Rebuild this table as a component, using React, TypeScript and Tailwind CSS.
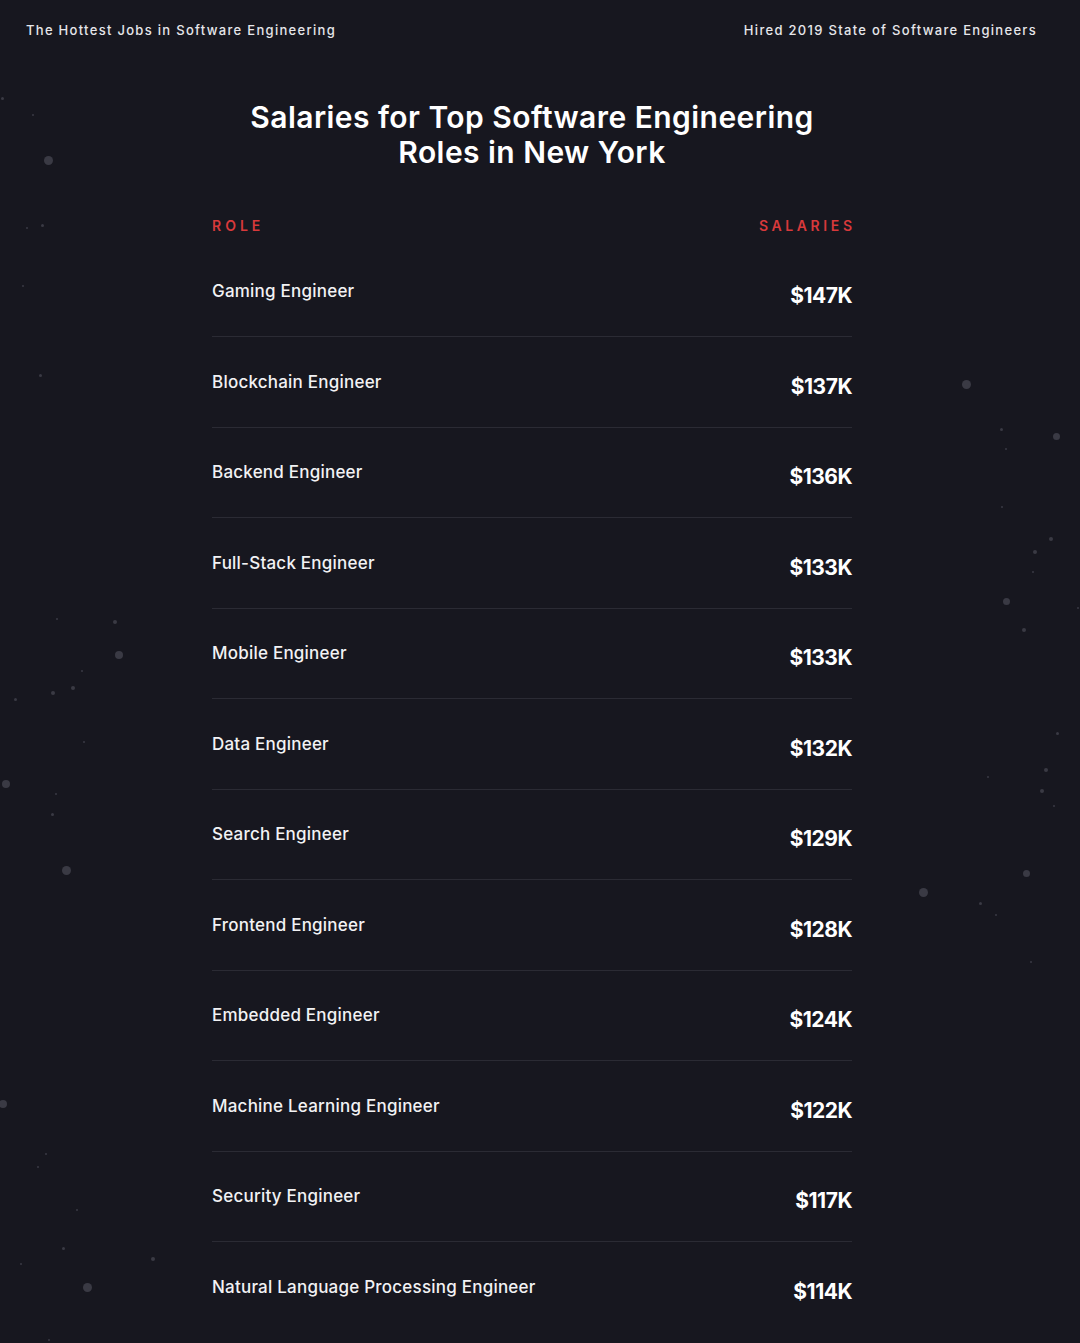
import React from "react";

const rows: [string, string][] = [
  ["Gaming Engineer", "$147K"],
  ["Blockchain Engineer", "$137K"],
  ["Backend Engineer", "$136K"],
  ["Full-Stack Engineer", "$133K"],
  ["Mobile Engineer", "$133K"],
  ["Data Engineer", "$132K"],
  ["Search Engineer", "$129K"],
  ["Frontend Engineer", "$128K"],
  ["Embedded Engineer", "$124K"],
  ["Machine Learning Engineer", "$122K"],
  ["Security Engineer", "$117K"],
  ["Natural Language Processing Engineer", "$114K"],
];

const dots: [number, number, number][] = [
  [2, 98, 1.5], [33, 115, 1], [48, 160, 4.5], [42, 225, 1.5], [27, 228, 0.7], [23, 286, 1], [40, 375, 1.5],
  [57, 619, 1], [115, 622, 2], [119, 655, 4], [82, 671, 1], [73, 688, 2], [53, 693, 2], [15, 699, 1.5],
  [84, 742, 1], [6, 784, 4], [56, 794, 1], [52, 814, 1.5], [66, 870, 4.5],
  [3, 1104, 4], [46, 1154, 1], [38, 1167, 1], [77, 1210, 1], [63, 1248, 1.5], [21, 1264, 1], [153, 1259, 2],
  [87, 1287, 4.5], [49, 1340, 1],
  [966, 384, 4.5], [1001, 429, 1.5], [1056, 436, 3.5], [1006, 449, 1], [1002, 507, 1], [1051, 539, 2],
  [1035, 552, 2], [1033, 572, 1], [1006, 601, 3.5], [1024, 630, 2], [1078, 608, 1],
  [1057, 733, 1.5], [1046, 770, 2], [988, 777, 1], [1042, 791, 2], [1054, 806, 1], [1026, 873, 3.5],
  [923, 892, 4.5], [980, 903, 1.5], [996, 915, 1], [1031, 962, 1],
];

export default function App() {
  return (
    <div
      className="relative w-[1080px] h-[1343px] overflow-hidden bg-[#17171f] text-white"
      style={{ fontFamily: "Inter, 'Noto Sans', sans-serif" }}
    >
      {dots.map(([x, y, r], i) => (
        <div
          key={i}
          className="absolute rounded-full bg-[#3a3a44]"
          style={{ left: x - r, top: y - r, width: r * 2, height: r * 2 }}
        />
      ))}

      <div className="relative">
        <div className="flex justify-between px-[26px] pt-[21px] h-[39px] text-[13px] leading-[18px] tracking-[1.3px] text-[#e6e6ea] font-medium">
          <span>The Hottest Jobs in Software Engineering</span>
          <span className="mr-[17px]">Hired 2019 State of Software Engineers</span>
        </div>

        <div className="ml-[212px] w-[640px]">
          <h1 className="mt-[60.5px] text-center text-[30px] leading-[35px] font-semibold tracking-[0.45px]">
            Salaries for Top Software Engineering
            <br />
            Roles in New York
          </h1>

          <div className="mt-[47.5px] flex justify-between h-[18px] text-[14px] leading-[18px] font-semibold text-[#d8393b]">
            <span className="tracking-[4px]">ROLE</span>
            <span className="tracking-[3.6px] -mr-[3.6px]">SALARIES</span>
          </div>

          <div className="mt-[11.5px]">
            {rows.map(([role, sal], i) => (
              <div
                key={role}
                className={`flex justify-between items-start h-[90.5px] ${
                  i < rows.length - 1 ? "border-b border-[#2b2b34]" : ""
                }`}
              >
                <span className="pt-[34.5px] text-[17px] leading-[20px] font-medium text-[#f2f2f4] tracking-[0.22px]">
                  {role}
                </span>
                <span className="pt-[37.5px] text-[21px] leading-[24px] font-bold tracking-[-0.5px]">{sal}</span>
              </div>
            ))}
          </div>
        </div>
      </div>
    </div>
  );
}
